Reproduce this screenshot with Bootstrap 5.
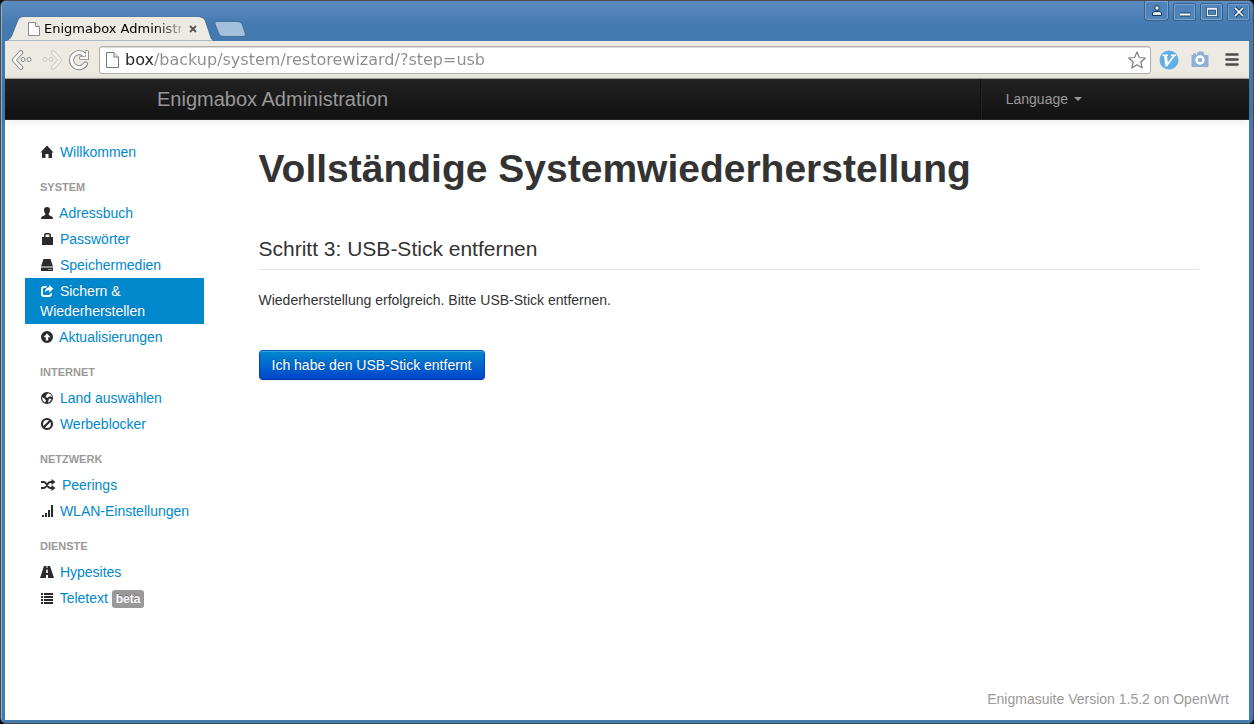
<!DOCTYPE html>
<html lang="de">
<head>
<meta charset="utf-8">
<meta name="viewport" content="width=device-width, initial-scale=1">
<title>Enigmabox Administration</title>
<link href="https://cdn.jsdelivr.net/npm/bootstrap@5.3.0/dist/css/bootstrap.min.css" rel="stylesheet">
<style>
  body { font-family: "Liberation Sans", Arial, sans-serif; font-size: 14px; line-height: 20px; color: #333; background: #000; }
  a { color: #08c; }

  /* Window frame */
  .win-frame { background: #447ab0; border: 1px solid #4a4a4a; border-radius: 6px; padding: 0 4px 3px; box-shadow: inset 1px 1px 0 #8aaed3; }
  .win-top { height: 40px; margin: 0 -3px; padding: 0 2px 0 3px; background: linear-gradient(#5b8bbf, #447ab0 60%); border-radius: 5px 5px 0 0; }
  .tab-box { width: 209px; height: 24px; padding: 0 0 0 23px; z-index: 0; }
  .tab-shape { left: 0; bottom: 0; z-index: -1; }
  .tab-title { font-family: "DejaVu Sans", sans-serif; font-size: 13px; color: #000; width: 137px;
    -webkit-mask-image: linear-gradient(to right, #000 112px, transparent 146px); mask-image: linear-gradient(to right, #000 112px, transparent 146px); }
  .bare { border: 0; background: none; padding: 0; display: inline-flex; align-items: center; justify-content: center; }
  .win-keys { padding-top: 2px; }
  .win-btn { width: 23px; height: 18px; border: 1px solid #34618f; border-radius: 2px; background: #4f84ba; box-shadow: inset 0 0 0 1px #7ba2cb; }
  .win-user { width: 25px; height: 20px; border-top: 0; border-radius: 0 0 4px 4px; }

  .tool-strip { height: 38px; background: #edeae3; border-bottom: 1px solid #a9a6a0; padding: 0 10px 0 6px; }
  .url-wrap { height: 28px; background: #fff; border: 1px solid #b1aea8; border-radius: 3px; box-shadow: inset 0 1px 0 #ddd; padding: 0 4px 0 6px; }
  .url-input { border: 0; outline: 0; padding: 0 0 0 2px; height: 24px; font-family: "DejaVu Sans", sans-serif; font-size: 16px; line-height: 24px;
    background: linear-gradient(to right, #222 31px, #8c8c8c 31px); -webkit-background-clip: text; background-clip: text; color: transparent; }
  .ext-gap { margin-left: 12px; }

  /* Page */
  .page-area { background: #fff; }
  .top-nav { height: 41px; padding: 0; background: linear-gradient(#222, #111); border-bottom: 1px solid #252525; box-shadow: 0 1px 10px rgba(0,0,0,.1); }
  .fixed-box { width: 100%; max-width: 940px; margin: 0 auto; }
  .brand-link { font-size: 20px; line-height: 20px; color: #999; text-shadow: 0 -1px 0 rgba(0,0,0,.25); }
  .nav-rule { height: 40px; border-left: 1px solid #111; border-right: 1px solid #222; margin: 0 9px; }
  .lang-link { color: #999; padding: 0 15px; }
  .lang-link::after { margin-left: 6px; border-top-width: 4px; border-left-width: 4px; border-right-width: 4px; vertical-align: 3px; }
  .body-row { padding: 19px 20px 11px; }
  .side-col { flex: 0 0 15%; max-width: 179px; }
  .side-col .nav-link { padding: 3px 15px; color: #08c; border-radius: 0; }
  .side-col .nav-link.active { background: #08c; color: #fff; text-shadow: 0 -1px 0 rgba(0,0,0,.2); }
  .side-head { margin-top: 9px; padding: 3px 15px; font-size: 11px; font-weight: 700; color: #999; text-shadow: 0 1px 0 rgba(255,255,255,.5); text-transform: uppercase; }
  .glyph { width: 14px; height: 14px; margin-right: 2px; fill: #2b2b2b; vertical-align: -2px; }
  .glyph-wide { width: 16px; }
  .active .glyph { fill: #fff; }
  .beta-tag { display: inline-block; background: #999; color: #fff; font-size: 12px; font-weight: 700; line-height: 14px; padding: 2px 4px; border-radius: 3px; text-shadow: 0 -1px 0 rgba(0,0,0,.25); }
  .page-title { font-size: 39px; line-height: 40px; font-weight: 700; margin: 10px 0 40px; }
  .step-title { font-size: 21px; line-height: 40px; font-weight: 400; border-bottom: 1px solid #e5e5e5; margin-bottom: 20px; }
  .btn-step { font-size: 14px; line-height: 20px; padding: 4px 12px; color: #fff; background: linear-gradient(#08c, #04c); border: 1px solid; border-color: #0064b8 #04c #0039a6; border-radius: 4px; text-shadow: 0 -1px 0 rgba(0,0,0,.25); box-shadow: inset 0 1px 0 rgba(255,255,255,.2), 0 1px 2px rgba(0,0,0,.05); }
  .foot-note { color: #999; }
</style>
</head>
<body>
<div class="win-frame min-vh-100 d-flex flex-column">
  <header class="win-top d-flex">
    <div class="tab-box position-relative d-flex align-items-center align-self-end flex-shrink-0">
      <svg class="tab-shape position-absolute" width="209" height="25" viewBox="0 0 209 25"><path d="M0 25C4 24 6 22 7 19L13 4Q14 1 18 .5H194Q198 1 200 4L205 19Q206 24 209 25Z" fill="#edeae3" stroke="#2f5f90" stroke-width=".7"/></svg>
      <svg width="12" height="14" viewBox="0 0 12 14" class="flex-shrink-0"><path d="M1 .5H7.500L11.500 4.500V13.500H.5V.5Z" fill="#fff" stroke="#8b8b8b"/><path d="M7.500.5V4.500H11.500" fill="#eee" stroke="#8b8b8b"/></svg>
      <span class="tab-title text-nowrap overflow-hidden flex-shrink-0 ms-1">Enigmabox Administr</span>
      <button class="bare ms-2" aria-label="Tab schließen"><svg width="8" height="8" viewBox="0 0 8 8"><path d="M1 1L7 7M7 1L1 7" stroke="#555" stroke-width="1.800"/></svg></button>
    </div>
    <button class="bare align-self-end mb-1" aria-label="Neuer Tab"><svg width="33" height="16" viewBox="0 0 33 16"><path d="M3 .5H24Q27 .5 28 3L31.500 13Q32 15.500 29 15.500H9Q6 15.500 5 13L1 3Q.5 .5 3 .5Z" fill="#a4bfda" stroke="#33648f" stroke-width=".8"/></svg></button>
    <div class="ms-auto d-flex align-items-start">
      <button class="bare win-btn win-user me-1" aria-label="Benutzer"><svg width="10" height="11" viewBox="0 0 10 11"><circle cx="5" cy="3" r="2.300" fill="#dce8f4" stroke="#17344f"/><path d="M.5 10.500V8Q1 6.500 3 6.500H7Q9 6.500 9.500 8V10.500Z" fill="#dce8f4" stroke="#17344f"/></svg></button>
      <div class="win-keys d-flex gap-1">
      <button class="bare win-btn" aria-label="Minimieren"><svg width="12" height="12"><path d="M1 8.500H11" stroke="#1d4166" stroke-width="4"/><path d="M1 8.500H11" stroke="#fff" stroke-width="2"/></svg></button>
      <button class="bare win-btn" aria-label="Maximieren"><svg width="12" height="12"><path d="M1.500 3H10.500V9.500H1.500Z" fill="none" stroke="#1d4166" stroke-width="3"/><path d="M1.500 3H10.500V9.500H1.500ZM1 2.500H11" fill="none" stroke="#e8f1fa" stroke-width="1.300"/></svg></button>
      <button class="bare win-btn" aria-label="Schließen"><svg width="12" height="12"><path d="M2 2L10 10M10 2L2 10" stroke="#1d4166" stroke-width="3.400"/><path d="M2 2L10 10M10 2L2 10" stroke="#fff" stroke-width="1.700"/></svg></button>
      </div>
    </div>
  </header>

  <div class="tool-strip d-flex align-items-center">
    <button class="bare" aria-label="Zurück"><svg width="22" height="20" viewBox="0 0 22 20"><path d="M10 2.500L3 10L10 17.500" fill="none" stroke="#858585" stroke-width="4.500" stroke-linecap="round" stroke-linejoin="round"/><path d="M10 2.500L3 10L10 17.500" fill="none" stroke="#fafaf8" stroke-width="2.700" stroke-linecap="round" stroke-linejoin="round"/><g fill="#f4f3ef" stroke="#858585"><circle cx="12" cy="9.500" r="2"/><circle cx="18" cy="9.500" r="2"/></g></svg></button>
    <button class="bare ms-2" aria-label="Vorwärts"><svg width="22" height="20" viewBox="0 0 22 20"><path d="M12 2.500L19 10L12 17.500" fill="none" stroke="#cbc8c2" stroke-width="4.500" stroke-linecap="round" stroke-linejoin="round"/><path d="M12 2.500L19 10L12 17.500" fill="none" stroke="#f1efea" stroke-width="2.700" stroke-linecap="round" stroke-linejoin="round"/><g fill="#f1efea" stroke="#cbc8c2"><circle cx="4" cy="9.500" r="2"/><circle cx="10" cy="9.500" r="2"/></g></svg></button>
    <button class="bare ms-1 me-2" aria-label="Neu laden"><svg width="24" height="22" viewBox="0 0 24 22"><g fill="none" stroke="#858585" stroke-width="5" stroke-linecap="round"><path d="M17 5.500A7.500 7.500 0 1 0 18.500 15"/><path d="M20 3V9H14" stroke-width="4"/></g><g fill="none" stroke="#fafaf8" stroke-linecap="round"><path d="M17 5.500A7.500 7.500 0 1 0 18.500 15" stroke-width="3.200"/><path d="M20 3V9H14" stroke-width="2.300"/></g></svg></button>
    <div class="url-wrap d-flex align-items-center flex-grow-1">
      <svg width="13" height="16" viewBox="0 0 13 16" class="flex-shrink-0 me-1"><path d="M1 .5H8L12.500 5V15.500H.5V.5Z" fill="#fff" stroke="#777"/><path d="M8 .5V5H12.500" fill="#eee" stroke="#777"/></svg>
      <input class="url-input flex-grow-1" type="text" aria-label="Adresse" value="box/backup/system/restorewizard/?step=usb">
      <button class="bare" aria-label="Lesezeichen"><svg width="18" height="18" viewBox="0 0 18 18"><path d="M9 1L11.400 6.500L17.300 7L12.800 11L14.200 17L9 13.800L3.800 17L5.200 11L.7 7L6.600 6.500Z" fill="#fff" stroke="#7d7d7d" stroke-width="1.200" stroke-linejoin="round"/></svg></button>
    </div>
    <button class="bare ms-2" aria-label="Vimium"><svg width="20" height="20" viewBox="0 0 20 20"><circle cx="10" cy="10" r="9.500" fill="#62afe4"/><path d="M3.500 4.500H9V6H8L8.800 12.500L13.500 6H12V4.500H17V6H16L8 16.500H6.500L5 6H3.500Z" fill="#fff"/></svg></button>
    <button class="bare ext-gap" aria-label="Bildschirmfoto"><svg width="18" height="17" viewBox="0 0 18 17"><path d="M1 4H2V2.500H5V4H5.500L6.500 1.500Q7 .5 8 .5H11Q12 .5 12.500 1.500L13.500 4H16.500Q17.500 4 17.500 5V15Q17.500 16 16.500 16H1.500Q.5 16 .5 15V5Q.5 4 1 4Z" fill="#8fb0d4"/><circle cx="9" cy="9" r="3.500" fill="#8fb0d4" stroke="#fff" stroke-width="2.400"/></svg></button>
    <button class="bare ms-3" aria-label="Menü"><svg width="14" height="15" viewBox="0 0 14 15"><path d="M1.500 2.500H12.500M1.500 7.500H12.500M1.500 12.500H12.500" stroke="#4c4c4c" stroke-width="2.600" stroke-linecap="round"/></svg></button>
  </div>

  <div class="page-area flex-grow-1 d-flex flex-column">
    <nav class="top-nav navbar align-items-start">
      <div class="fixed-box d-flex align-items-center">
        <a class="brand-link text-decoration-none" href="#">Enigmabox Administration</a>
        <span class="nav-rule ms-auto"></span>
        <div class="dropdown"><a class="lang-link dropdown-toggle d-block text-decoration-none" href="#" data-bs-toggle="dropdown">Language</a>
          <ul class="dropdown-menu"><li><a class="dropdown-item" href="#">Deutsch</a></li></ul></div>
      </div>
    </nav>

    <div class="body-row d-flex flex-grow-1">
      <nav class="side-col">
        <ul class="nav flex-column">
          <li><a class="nav-link" href="#"><svg class="glyph" viewBox="0 0 14 14"><path d="M7 .5L13.500 7.500H12V13H8.500V9H5.500V13H2V7.500H.5Z"/></svg> Willkommen</a></li>
          <li class="side-head">System</li>
          <li><a class="nav-link" href="#"><svg class="glyph" viewBox="0 0 14 14"><path d="M7 1Q10 1 10 4Q10 6.500 8.800 7.800V9L12 10.500Q13 11 13 13H1Q1 11 2 10.500L5.200 9V7.800Q4 6.500 4 4Q4 1 7 1Z"/></svg> Adressbuch</a></li>
          <li><a class="nav-link" href="#"><svg class="glyph" viewBox="0 0 14 14"><path fill-rule="evenodd" d="M2 5H4V3Q4 1 6 1H8.500Q11 1 11 3V5H13V13H2ZM5.500 5H9.500V3.500Q9.500 2.500 8.500 2.500H6.500Q5.500 2.500 5.500 3.500Z"/></svg> Passwörter</a></li>
          <li><a class="nav-link" href="#"><svg class="glyph" viewBox="0 0 14 14"><path d="M3.500 1H10.500L13 8.500H1Z"/><path fill-rule="evenodd" d="M1 9.500H13V13H1ZM8.500 11V12H9.500V11ZM10.500 11V12H11.500V11Z"/></svg> Speichermedien</a></li>
          <li><a class="nav-link active" href="#"><svg class="glyph" viewBox="0 0 14 14"><path d="M7 2H4Q1 2 1 5V10Q1 13 4 13H9Q12 13 12 10V8.500L10 10Q10 11 9 11H4Q3 11 3 10V5Q3 4 4 4H6Z"/><path d="M9 1L13.500 4.700L9 8.500V6.200Q6 6 5 8.500Q5 3.500 9 3.300Z"/></svg> Sichern &amp; Wiederherstellen</a></li>
          <li><a class="nav-link" href="#"><svg class="glyph" viewBox="0 0 14 14"><path fill-rule="evenodd" d="M7 1A6 6 0 1 1 7 13A6 6 0 1 1 7 1ZM7 3.500L3.500 7.200H5.800V10.500H8.200V7.200H10.500Z"/></svg> Aktualisierungen</a></li>
          <li class="side-head">Internet</li>
          <li><a class="nav-link" href="#"><svg class="glyph" viewBox="0 0 14 14"><path fill-rule="evenodd" d="M7 1A6 6 0 1 1 7 13A6 6 0 1 1 7 1ZM8 2.300L11 3.500L12 6L10 5.200L8.500 6L7 7L5.500 5.500L6.500 4ZM9 7.500L11.500 8L10 10.500L8 11.800L8.500 9.500ZM2.200 6L4.500 7.500L6 9.500L5 11.500Q2 10 2.200 6Z"/></svg> Land auswählen</a></li>
          <li><a class="nav-link" href="#"><svg class="glyph" viewBox="0 0 14 14"><g fill="none" stroke="#2b2b2b" stroke-width="2.200"><circle cx="7" cy="7" r="5"/><path d="M3.500 10.500L10.500 3.500"/></g></svg> Werbeblocker</a></li>
          <li class="side-head">Netzwerk</li>
          <li><a class="nav-link" href="#"><svg class="glyph glyph-wide" viewBox="0 0 16 14"><path d="M1 4H3.500Q5 4 6 5.500L8 8.500Q9 10 10.500 10H12M1 10H3.500Q5 10 6 8.500L8 5.500Q9 4 10.500 4H12" fill="none" stroke="#2b2b2b" stroke-width="2"/><path d="M11.500 1L15.500 4L11.500 7ZM11.500 7L15.500 10L11.500 13Z"/></svg> Peerings</a></li>
          <li><a class="nav-link text-nowrap" href="#"><svg class="glyph" viewBox="0 0 14 14"><path d="M2 11H4V13H2ZM5 9H7V13H5ZM8 6H10V13H8ZM11 1H13V13H11Z"/></svg> WLAN-Einstellungen</a></li>
          <li class="side-head">Dienste</li>
          <li><a class="nav-link" href="#"><svg class="glyph" viewBox="0 0 14 14"><path fill-rule="evenodd" d="M4 1H6.500V3H7.500V1H10L14 13H8V10H6V13H0ZM6.300 4.500L6.100 8H7.900L7.700 4.500Z"/></svg> Hypesites</a></li>
          <li><a class="nav-link" href="#"><svg class="glyph" viewBox="0 0 14 14"><path d="M1 2H3V4H1ZM4 2H13V4H4ZM1 5H3V7H1ZM4 5H13V7H4ZM1 8H3V10H1ZM4 8H13V10H4ZM1 11H3V13H1ZM4 11H13V13H4Z"/></svg> Teletext <span class="beta-tag">beta</span></a></li>
        </ul>
      </nav>
      <div class="d-flex flex-column flex-grow-1 ps-4">
        <main class="fixed-box">
          <h1 class="page-title">Vollständige Systemwiederherstellung</h1>
          <h2 class="step-title">Schritt 3: USB-Stick entfernen</h2>
          <p class="mb-4">Wiederherstellung erfolgreich. Bitte USB-Stick entfernen.</p>
          <form class="pt-3"><button type="button" class="btn btn-step">Ich habe den USB-Stick entfernt</button></form>
        </main>
        <footer class="foot-note mt-auto text-end">Enigmasuite Version 1.5.2 on OpenWrt</footer>
      </div>
    </div>
  </div>
</div>
<script src="https://cdn.jsdelivr.net/npm/bootstrap@5.3.0/dist/js/bootstrap.bundle.min.js"></script>
</body>
</html>
